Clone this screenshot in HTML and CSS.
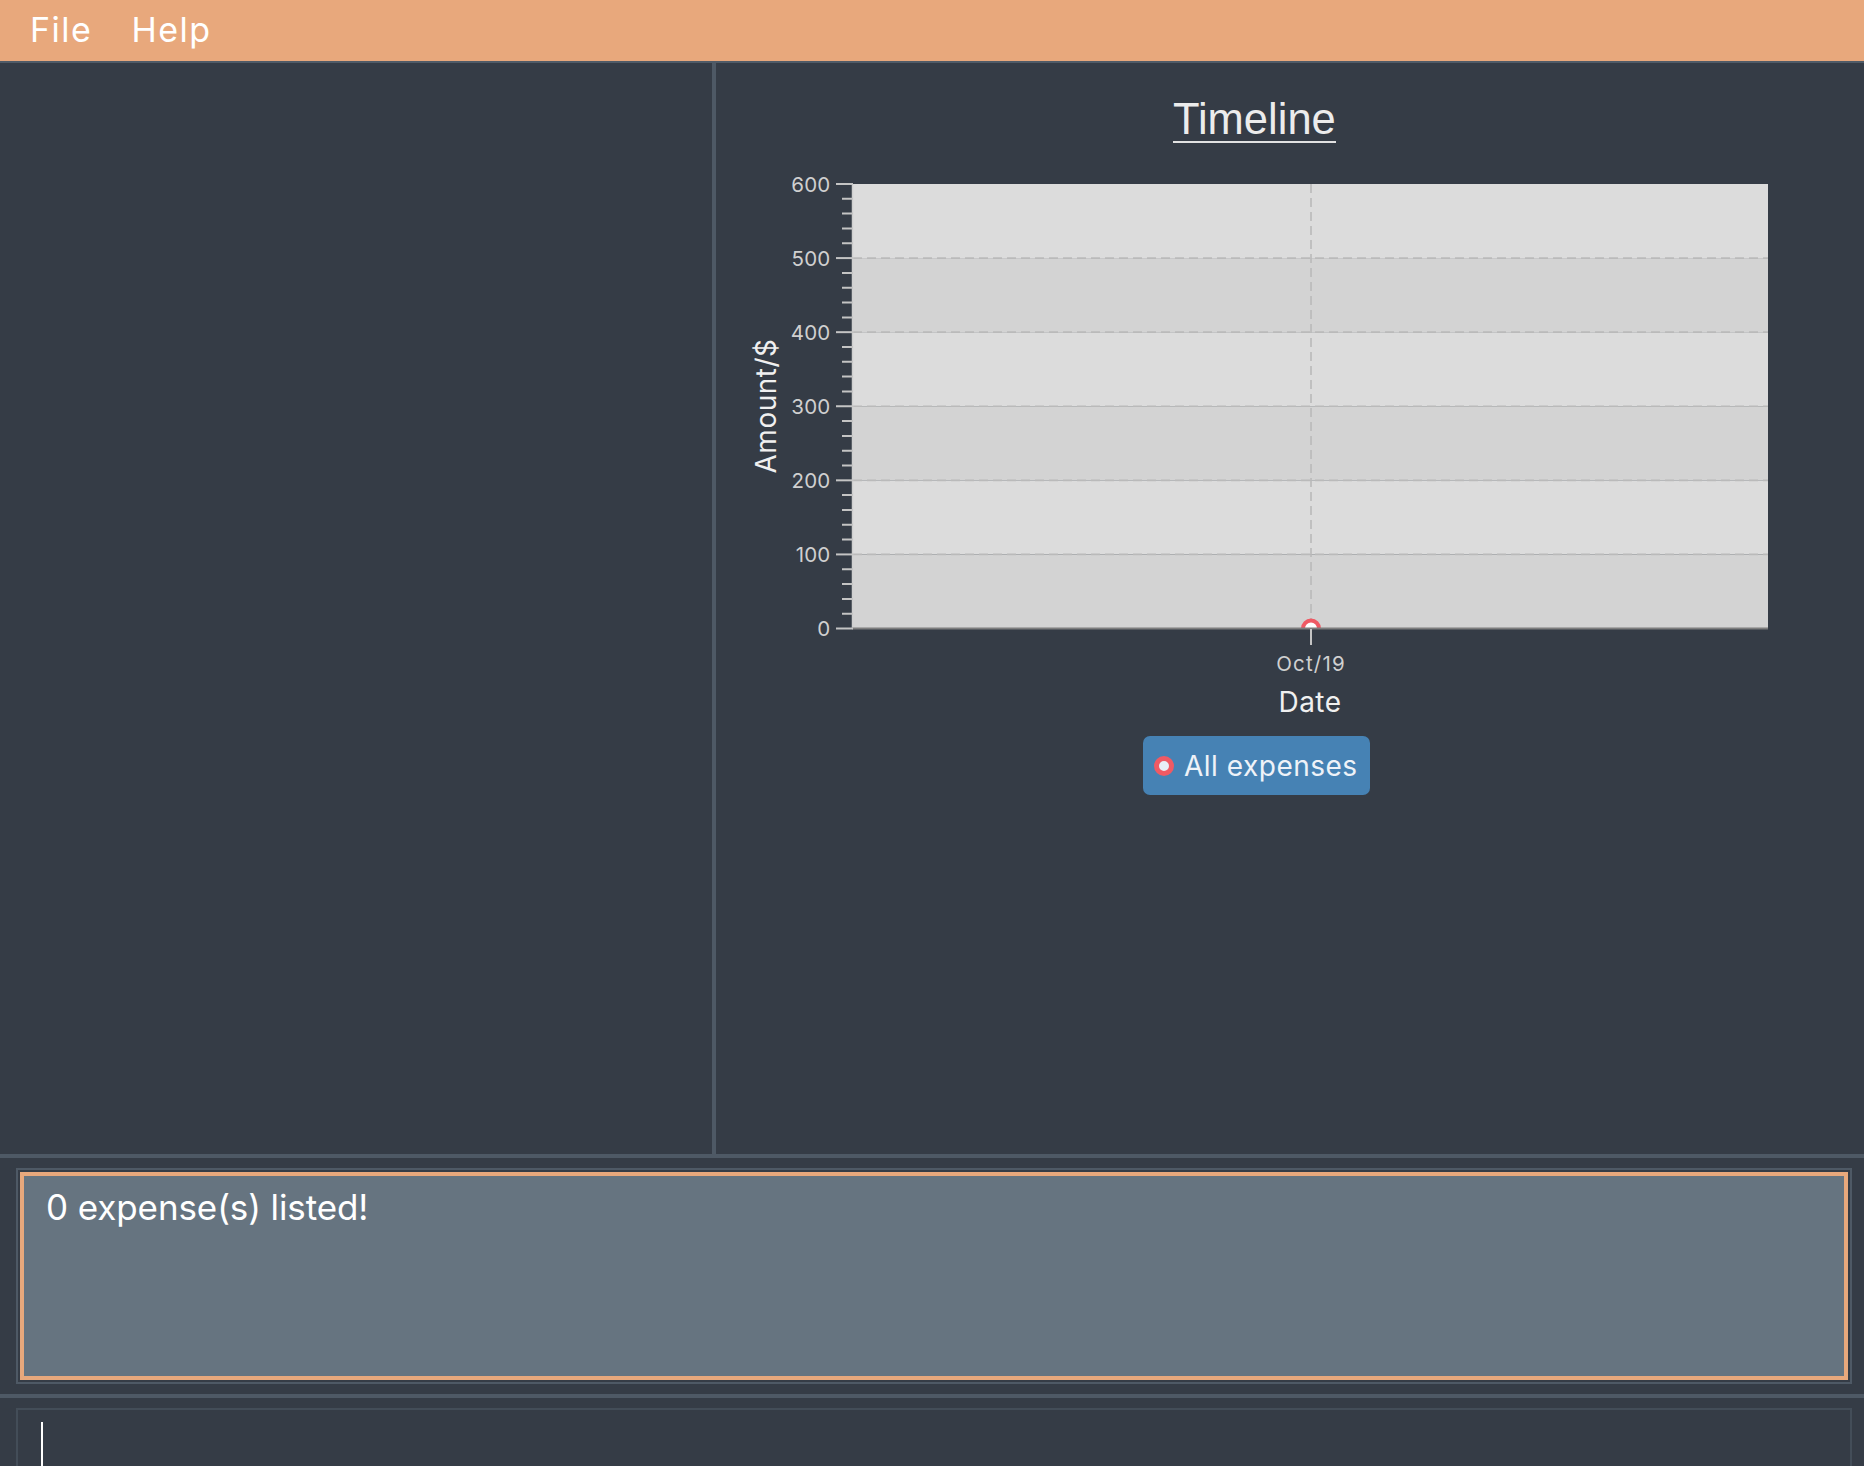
FILE: index.html
```html
<!DOCTYPE html>
<html lang="en">
<head>
<meta charset="utf-8">
<title>Expenses</title>
<link rel="stylesheet" href="styles.css">
</head>
<body>
<div class="app">
  <header class="menubar">
    <span class="menu-item">File</span>
    <span class="menu-item">Help</span>
  </header>
  <main class="main">
    <section class="left-pane"></section>
    <section class="right-pane">
      <div class="chart-title">Timeline</div>
      <svg class="chart" width="1148" height="560" viewBox="0 0 1148 560" xmlns="http://www.w3.org/2000/svg">
        <defs>
          <clipPath id="plotclip"><rect x="137" y="24" width="915" height="444.5"/></clipPath>
        </defs>
        <rect x="137" y="24" width="915" height="74.08" fill="#dcdcdc"/>
        <rect x="137" y="98.08" width="915" height="74.08" fill="#d3d3d3"/>
        <rect x="137" y="172.17" width="915" height="74.08" fill="#dcdcdc"/>
        <rect x="137" y="246.25" width="915" height="74.08" fill="#d3d3d3"/>
        <rect x="137" y="320.33" width="915" height="74.08" fill="#dcdcdc"/>
        <rect x="137" y="394.42" width="915" height="74.08" fill="#d3d3d3"/>
        <g stroke="#bababa" stroke-width="1.6" stroke-dasharray="9 5" fill="none">
          <line x1="137" y1="98.08" x2="1052" y2="98.08"/>
          <line x1="137" y1="172.17" x2="1052" y2="172.17"/>
          <line x1="137" y1="246.25" x2="1052" y2="246.25"/>
          <line x1="137" y1="320.33" x2="1052" y2="320.33"/>
          <line x1="137" y1="394.42" x2="1052" y2="394.42"/>
          <line x1="595" y1="24" x2="595" y2="468"/>
        </g>
        <circle cx="595" cy="468.5" r="8" fill="#ffffff" stroke="#ef5a64" stroke-width="4" clip-path="url(#plotclip)"/>
        <line x1="136.5" y1="24" x2="136.5" y2="469" stroke="#cfcfcf" stroke-width="1.5"/>
        <line x1="136" y1="468.5" x2="1052" y2="468.5" stroke="#7d7d7d" stroke-width="2"/>
        <g stroke="#c4c4c4" stroke-width="2">
          <line x1="120" y1="24" x2="137" y2="24"/>
          <line x1="120" y1="98.08" x2="137" y2="98.08"/>
          <line x1="120" y1="172.17" x2="137" y2="172.17"/>
          <line x1="120" y1="246.25" x2="137" y2="246.25"/>
          <line x1="120" y1="320.33" x2="137" y2="320.33"/>
          <line x1="120" y1="394.42" x2="137" y2="394.42"/>
          <line x1="120" y1="468.5" x2="137" y2="468.5"/>
          <path d="M126 38.8H137M126 53.6H137M126 68.4H137M126 83.3H137M126 112.9H137M126 127.7H137M126 142.5H137M126 157.4H137M126 187H137M126 201.8H137M126 216.6H137M126 231.4H137M126 261.1H137M126 275.9H137M126 290.7H137M126 305.5H137M126 335.1H137M126 350H137M126 364.8H137M126 379.6H137M126 409.2H137M126 424H137M126 438.9H137M126 453.7H137"/>
          <line x1="595" y1="469" x2="595" y2="485"/>
        </g>
        <g class="tick-label" text-anchor="end">
          <text x="114.5" y="32">600</text>
          <text x="114.5" y="106">500</text>
          <text x="114.5" y="180">400</text>
          <text x="114.5" y="254">300</text>
          <text x="114.5" y="328">200</text>
          <text x="114.5" y="402">100</text>
          <text x="114.5" y="476">0</text>
        </g>
        <text class="tick-label date-tick" x="595" y="510.5" text-anchor="middle">Oct/19</text>
        <text class="axis-label" x="594" y="551.5" text-anchor="middle">Date</text>
        <text class="axis-label" transform="translate(60 246) rotate(-90)" x="0" y="0" text-anchor="middle">Amount/$</text>
      </svg>
      <div class="legend">
        <span class="legend-dot"></span>
        <span class="legend-text">All expenses</span>
      </div>
    </section>
  </main>
  <div class="result-area">
    <div class="result-frame">
      <div class="result-box">0 expense(s) listed!</div>
    </div>
  </div>
  <div class="command-area">
    <div class="command-box"><span class="caret"></span></div>
  </div>
</div>
</body>
</html>
```

FILE: styles.css
```css
html, body {
  margin: 0;
  padding: 0;
}

body {
  background: #353c46;
  font-family: Inter, "Noto Sans", sans-serif;
  overflow: hidden;
  height: 1466px;
}

.app {
  display: flex;
  flex-direction: column;
  height: 1466px;
}

.menubar {
  height: 63px;
  box-sizing: border-box;
  background: #e8a87c;
  border-bottom: 2px solid #505b67;
  display: flex;
  align-items: flex-start;
  gap: 39px;
  padding: 9px 0 0 30px;
  flex: none;
}

.menu-item {
  font-size: 34px;
  line-height: 41px;
  letter-spacing: 1.5px;
  color: #ffffff;
}

.main {
  height: 1095px;
  box-sizing: border-box;
  display: flex;
  border-bottom: 4px solid #4e5965;
  flex: none;
}

.left-pane {
  width: 716px;
  box-sizing: border-box;
  border-right: 4px solid #4e5965;
  flex: none;
}

.right-pane {
  flex: 1;
  display: flex;
  flex-direction: column;
  align-items: flex-start;
}

.chart-title {
  margin: 35px 0 0 457px;
  font-family: "Liberation Sans", Arial, sans-serif;
  font-size: 43.5px;
  line-height: 43px;
  color: #ececec;
  border-bottom: 2px solid #e2e2e2;
}

.chart {
  display: block;
  margin-top: 17px;
}

.tick-label {
  font-family: Inter, "Noto Sans", sans-serif;
  font-size: 20.5px;
  letter-spacing: 0.2px;
  fill: #d0d0d0;
}

.date-tick {
  letter-spacing: 1.2px;
}

.axis-label {
  font-family: Inter, "Noto Sans", sans-serif;
  font-size: 28px;
  letter-spacing: 0.5px;
  fill: #f0f0f0;
}

.legend {
  margin: 16px 0 0 427px;
  height: 59px;
  box-sizing: border-box;
  background: #4682b4;
  border-radius: 7px;
  display: flex;
  align-items: center;
  gap: 10px;
  padding: 0 12px 0 11px;
}

.legend-dot {
  width: 20px;
  height: 20px;
  box-sizing: border-box;
  border-radius: 50%;
  border: 5px solid #ef5a64;
  background: #e8eef6;
  flex: none;
}

.legend-text {
  font-size: 28px;
  line-height: 34px;
  letter-spacing: 0.5px;
  color: #eef2f8;
}

.result-area {
  flex: none;
  height: 240px;
  box-sizing: border-box;
  padding: 10px 12px 10px 16px;
  border-bottom: 4px solid #4e5965;
}

.result-frame {
  height: 216px;
  box-sizing: border-box;
  border: 2px solid #4e5965;
  padding: 2px;
}

.result-box {
  height: 100%;
  box-sizing: border-box;
  border: 4px solid #e8a87c;
  background: #667480;
  padding: 9px 0 0 22px;
  font-size: 35px;
  line-height: 44px;
  letter-spacing: -0.1px;
  color: #ffffff;
}

.command-area {
  flex: 1;
  padding: 10px 12px 0 16px;
  overflow: hidden;
}

.command-box {
  height: 100px;
  box-sizing: border-box;
  border: 2px solid #434d58;
  padding: 12px 0 0 23px;
}

.caret {
  display: block;
  width: 2px;
  height: 70px;
  background: #ffffff;
}
```
